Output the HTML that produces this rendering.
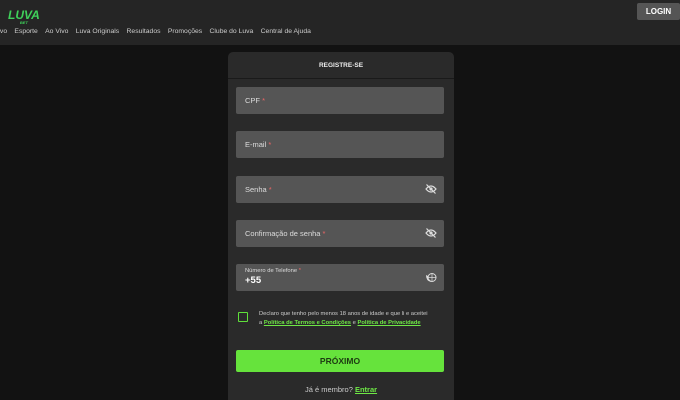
<!DOCTYPE html>
<html><head><style>
*{margin:0;padding:0;box-sizing:border-box}
html,body{width:680px;height:400px;overflow:hidden}
body{background:#121212;font-family:"Liberation Sans",sans-serif;position:relative;color:#ddd}
.hdr{position:absolute;left:0;top:0;width:680px;height:45px;background:#252525}
.logo{position:absolute;left:8px;top:8px;color:#3fd15a;font-weight:bold;font-style:italic;font-size:12px}
.nav{position:absolute;left:-6px;top:28px;font-size:6.8px;color:#ccc;white-space:nowrap}
.nav span{margin-right:7.3px}
.login{position:absolute;left:637px;top:3px;width:43px;height:17px;background:#555;border-radius:2px;color:#fff;font-size:8px;font-weight:bold;text-align:center;line-height:17px}
.card{position:absolute;left:228px;top:52px;width:226px;height:348px;background:#2a2a2a;border-radius:5px 5px 0 0}
.ct{height:27px;border-bottom:1px solid #1a1a1a;text-align:center;font-size:6.5px;font-weight:bold;color:#eee;line-height:27px}
.in{position:absolute;left:8px;width:208px;height:27px;background:#555;border-radius:2px;font-size:7.5px;color:#ddd;padding-left:9px;line-height:27px}
.in b{color:#e66;font-weight:normal}
.ico{position:absolute;right:7px;top:8px}
.cb{position:absolute;left:10px;top:260px;width:10px;height:10px;border:1.5px solid #5fe03a;border-radius:1px}
.txt{position:absolute;left:31px;top:258px;font-size:5.8px;color:#ccc;line-height:9px;width:195px;white-space:nowrap}
.txt u{color:#6ee845;font-weight:bold}
.btn{position:absolute;left:8px;top:298px;width:208px;height:22px;background:#66e33c;border-radius:2px;text-align:center;line-height:22px;font-size:8.5px;font-weight:bold;color:#1d3a12}
.mem{position:absolute;left:0;width:226px;top:333px;text-align:center;font-size:7.5px;color:#ccc}
.mem u{color:#6ee845;font-weight:bold}
</style></head><body>
<div class="hdr">
<div class="logo">LUVA<div style="font-size:4px;text-align:center;margin-top:-2px">BET</div></div>
<div class="nav"><span>Vivo</span><span>Esporte</span><span>Ao Vivo</span><span>Luva Originals</span><span>Resultados</span><span>Promoções</span><span>Clube do Luva</span><span>Central de Ajuda</span></div>
<div class="login">LOGIN</div>
</div>
<div class="card">
<div class="ct">REGISTRE-SE</div>
<div class="in" style="top:35px">CPF <b>*</b></div>
<div class="in" style="top:79px">E-mail <b>*</b></div>
<div class="in" style="top:124px">Senha <b>*</b><svg class="ico" width="12" height="10" viewBox="0 0 12 10"><path d="M1 5Q6 -1 11 5Q6 11 1 5Z" fill="none" stroke="#ddd" stroke-width="1.2"/><circle cx="6" cy="5" r="1.6" fill="#ddd"/><path d="M1.5 0.5L10.5 9.5" stroke="#ddd" stroke-width="1.2"/></svg></div>
<div class="in" style="top:168px">Confirmação de senha <b>*</b><svg class="ico" width="12" height="10" viewBox="0 0 12 10"><path d="M1 5Q6 -1 11 5Q6 11 1 5Z" fill="none" stroke="#ddd" stroke-width="1.2"/><circle cx="6" cy="5" r="1.6" fill="#ddd"/><path d="M1.5 0.5L10.5 9.5" stroke="#ddd" stroke-width="1.2"/></svg></div>
<div class="in" style="top:212px;line-height:normal"><div style="font-size:5.8px;margin-top:4px">Número de Telefone <b>*</b></div><div style="font-size:9.5px;font-weight:bold;color:#fff;margin-top:1px">+55</div><svg class="ico" width="12" height="11" viewBox="0 0 12 11"><circle cx="7" cy="5.5" r="4" fill="none" stroke="#ddd"/><path d="M7 1.5V9.5M3 5.5H11" stroke="#ddd" stroke-width=".7"/><path d="M1 3Q1 9 6 10L5 8Q3 7 3 4Z" fill="#ddd"/></svg></div>
<div class="cb"></div>
<div class="txt">Declaro que tenho pelo menos 18 anos de idade e que li e aceitei<br>a <u>Política de Termos e Condições</u> e <u>Política de Privacidade</u></div>
<div class="btn">PRÓXIMO</div>
<div class="mem">Já é membro? <u>Entrar</u></div>
</div>
</body></html>
